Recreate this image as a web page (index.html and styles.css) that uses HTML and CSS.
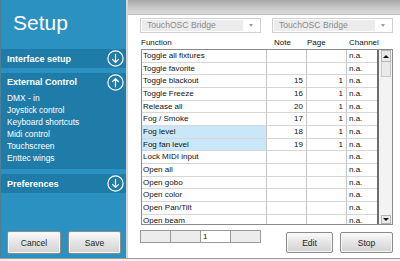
FILE: index.html
```html
<!DOCTYPE html>
<html lang="en">

<head>
    <meta charset="UTF-8">
    <meta name="viewport" content="width=device-width, initial-scale=1.0">
    <title>Setup</title>
    <link rel="stylesheet" href="styles.css">
</head>

<body>
    <div class="app">
        <aside class="side">
            <h1 class="title">Setup</h1>

            <div class="band">
                <span>Interface setup</span>
                <svg class="round" viewBox="0 0 17 17"><circle cx="8.5" cy="8.5" r="7.6"/><path d="M8.5 4.3V12.4M5.6 9.5L8.5 12.4L11.4 9.5"/></svg>
            </div>

            <div class="section">
                <div class="band open">
                    <span>External Control</span>
                    <svg class="round" viewBox="0 0 17 17"><circle cx="8.5" cy="8.5" r="7.6"/><path d="M8.5 12.7V4.6M5.6 7.5L8.5 4.6L11.4 7.5"/></svg>
                </div>
                <ul class="items">
                    <li>DMX - in</li>
                    <li>Joystick control</li>
                    <li>Keyboard shortcuts</li>
                    <li>Midi control</li>
                    <li>Touchscreen</li>
                    <li>Enttec wings</li>
                </ul>
            </div>

            <div class="band">
                <span>Preferences</span>
                <svg class="round" viewBox="0 0 17 17"><circle cx="8.5" cy="8.5" r="7.6"/><path d="M8.5 4.3V12.4M5.6 9.5L8.5 12.4L11.4 9.5"/></svg>
            </div>

            <div class="side-buttons">
                <button class="btn cancel">Cancel</button>
                <button class="btn save">Save</button>
            </div>
        </aside>

        <main class="panel">
            <div class="topbar"></div>

            <div class="content">
                <div class="selects">
                    <div class="select"><span class="select-text">TouchOSC Bridge</span><span class="caret"></span></div>
                    <div class="select"><span class="select-text">TouchOSC Bridge</span><span class="caret"></span></div>
                </div>

                <div class="thead">
                    <div class="h-func">Function</div>
                    <div class="h-note">Note</div>
                    <div class="h-page">Page</div>
                    <div class="h-chan">Channel</div>
                </div>

                <div class="table">
                    <div class="rows">
                        <div class="row"><div class="c-func">Toggle all fixtures</div><div class="c-num"></div><div class="c-num"></div><div class="c-chan">n.a.</div></div>
                        <div class="row"><div class="c-func">Toggle favorite</div><div class="c-num"></div><div class="c-num"></div><div class="c-chan">n.a.</div></div>
                        <div class="row"><div class="c-func">Toggle blackout</div><div class="c-num">15</div><div class="c-num">1</div><div class="c-chan">n.a.</div></div>
                        <div class="row"><div class="c-func">Toggle Freeze</div><div class="c-num">16</div><div class="c-num">1</div><div class="c-chan">n.a.</div></div>
                        <div class="row"><div class="c-func">Release all</div><div class="c-num">20</div><div class="c-num">1</div><div class="c-chan">n.a.</div></div>
                        <div class="row"><div class="c-func">Fog / Smoke</div><div class="c-num">17</div><div class="c-num">1</div><div class="c-chan">n.a.</div></div>
                        <div class="row sel"><div class="c-func">Fog level</div><div class="c-num">18</div><div class="c-num">1</div><div class="c-chan">n.a.</div></div>
                        <div class="row sel"><div class="c-func">Fog fan level</div><div class="c-num">19</div><div class="c-num">1</div><div class="c-chan">n.a.</div></div>
                        <div class="row"><div class="c-func">Lock MIDI input</div><div class="c-num"></div><div class="c-num"></div><div class="c-chan">n.a.</div></div>
                        <div class="row"><div class="c-func">Open all</div><div class="c-num"></div><div class="c-num"></div><div class="c-chan">n.a.</div></div>
                        <div class="row"><div class="c-func">Open gobo</div><div class="c-num"></div><div class="c-num"></div><div class="c-chan">n.a.</div></div>
                        <div class="row"><div class="c-func">Open color</div><div class="c-num"></div><div class="c-num"></div><div class="c-chan">n.a.</div></div>
                        <div class="row"><div class="c-func">Open Pan/Tilt</div><div class="c-num"></div><div class="c-num"></div><div class="c-chan">n.a.</div></div>
                        <div class="row"><div class="c-func">Open beam</div><div class="c-num"></div><div class="c-num"></div><div class="c-chan">n.a.</div></div>
                    </div>
                    <div class="scroll">
                        <div class="sb-btn"><span class="tri up"></span></div>
                        <div class="sb-thumb"></div>
                        <div class="sb-track"></div>
                        <div class="sb-btn down"><span class="tri dn"></span></div>
                    </div>
                </div>

                <div class="footer">
                    <div class="pager">
                        <div class="pg"></div>
                        <div class="pg"></div>
                        <div class="pg cur">1</div>
                        <div class="pg"></div>
                    </div>
                    <div class="actions">
                        <button class="btn edit">Edit</button>
                        <button class="btn stop">Stop</button>
                    </div>
                </div>
            </div>
        </main>
    </div>
</body>

</html>
```

FILE: styles.css
```css
* {
    margin: 0;
    padding: 0;
    box-sizing: border-box;
}

body {
    background-color: #f2f2f2;
    font-family: "Liberation Sans", Arial, sans-serif;
    width: 400px;
    height: 261px;
    overflow: hidden;
}

.app {
    display: flex;
    height: 259px;
    border-bottom: 1px solid #9c9c9c;
}

/* left menu */

.side {
    width: 128px;
    display: flex;
    flex-direction: column;
    background-color: #2a91c0;
    border-left: 1px solid #4d7f96;
    border-right: 2px solid #d6d6d6;
    color: #fff;
}

.title {
    height: 49px;
    padding: 12px 0 0 12px;
    font-size: 21px;
    line-height: 21px;
    font-weight: normal;
}

.band {
    height: 19px;
    display: flex;
    align-items: center;
    justify-content: space-between;
    padding: 0 2px 0 6px;
    background-color: #1f7ca8;
    font-size: 9px;
    font-weight: bold;
}

.band + .section,
.section + .band {
    margin-top: 5px;
}

.band.open {
    height: 18px;
    background: none;
}

.section {
    background-color: #1f7ca8;
    padding-bottom: 5px;
}

.round {
    width: 17px;
    height: 17px;
    fill: none;
    stroke: #fff;
    stroke-width: 1.2;
    stroke-linecap: round;
    stroke-linejoin: round;
}

.items {
    list-style: none;
    padding: 1px 0 0 6px;
    font-size: 8.4px;
    line-height: 12px;
}

.side-buttons {
    margin-top: auto;
    display: flex;
    gap: 7px;
    padding: 0 0 4px 6px;
}

.btn {
    height: 23px;
    font-family: "Liberation Sans", Arial, sans-serif;
    font-size: 8.5px;
    color: #222;
    background: linear-gradient(#fbfbfb, #e2e2e2 55%, #d3d3d3);
    border: 1px solid #8c8c8c;
    border-radius: 2px;
    box-shadow: inset 0 0 0 1px #f6f6f6;
}

.cancel {
    width: 54px;
}

.save {
    width: 53px;
}

/* right panel */

.panel {
    flex: 1;
    display: flex;
    flex-direction: column;
    background-color: #fff;
}

.topbar {
    height: 15px;
    background: linear-gradient(#a8a8a8, #cfcfcf 70%, #d9d9d9);
    border-bottom: 1px solid #bdbdbd;
}

.content {
    padding: 0 7px 0 12px;
    font-size: 8px;
    color: #111;
}

.selects {
    display: flex;
    gap: 11px;
    margin-top: 3px;
}

.select {
    width: 121px;
    height: 15px;
    display: flex;
    align-items: center;
    padding: 1px;
    border: 1px solid #d0d0d0;
    background-color: #fff;
}

.select-text {
    flex: 1;
    height: 100%;
    padding-left: 5px;
    line-height: 11px;
    background-color: #ececec;
    color: #8a8a8a;
    font-size: 8.6px;
}

.caret {
    width: 16px;
    display: flex;
    justify-content: center;
}

.caret::after {
    content: "";
    border-left: 2.5px solid transparent;
    border-right: 2.5px solid transparent;
    border-top: 3px solid #a0a0a0;
}

.thead {
    display: grid;
    grid-template-columns: 125px 40px 40px 30px;
    height: 16px;
    padding: 3px 0 0 1px;
    line-height: 13px;
}

.h-note {
    padding-left: 8px;
}

.h-page {
    padding-left: 1px;
}

.h-chan {
    padding-left: 3px;
}

.table {
    display: flex;
    height: 176px;
    margin-left: 1px;
    border: 1px solid #8a8a8a;
    overflow: hidden;
}

.rows {
    width: 235px;
}

.row {
    display: grid;
    grid-template-columns: 125px 40px 40px 30px;
    height: 12.67px;
    line-height: 12px;
}

.row > div {
    border-right: 1px solid #c6c6c6;
    border-bottom: 1px solid #d6d6d6;
    white-space: nowrap;
    overflow: hidden;
}

.row > .c-chan {
    border-right: none;
}

.c-func {
    padding-left: 1px;
}

.c-num {
    text-align: right;
    padding-right: 3px;
}

.c-chan {
    padding-left: 2px;
}

.row.sel .c-func {
    background-color: #cae6f9;
}

.scroll {
    width: 15px;
    display: flex;
    flex-direction: column;
    background-color: #f3f3f3;
    border-left: 2px solid #6e6e6e;
    padding: 0 1px 0 2px;
}

.sb-btn {
    height: 12px;
    display: flex;
    align-items: center;
    justify-content: center;
    background-color: #e9e9e9;
    border: 1px solid #b4b4b4;
}

.sb-btn.down {
    height: 9px;
}

.sb-thumb {
    height: 15px;
    background-color: #eaeaea;
    border: 1px solid #c8c8c8;
    border-top: none;
}

.sb-track {
    flex: 1;
}

.tri {
    border-left: 3px solid transparent;
    border-right: 3px solid transparent;
}

.tri.up {
    border-bottom: 3px solid #111;
}

.tri.dn {
    border-top: 3px solid #111;
}

.footer {
    display: flex;
    align-items: flex-start;
}

.pager {
    display: flex;
    margin-top: 5px;
    border: 1px solid #9a9a9a;
    border-right: none;
}

.pg {
    width: 30px;
    height: 11px;
    border-right: 1px solid #9a9a9a;
    background-color: #ececec;
    line-height: 11px;
    padding-left: 2px;
}

.pg.cur {
    background-color: #fff;
}

.actions {
    margin-left: auto;
    margin-top: 7px;
    display: flex;
    gap: 7px;
}

.edit {
    width: 47px;
    height: 21px;
}

.stop {
    width: 53px;
    height: 21px;
}
```
